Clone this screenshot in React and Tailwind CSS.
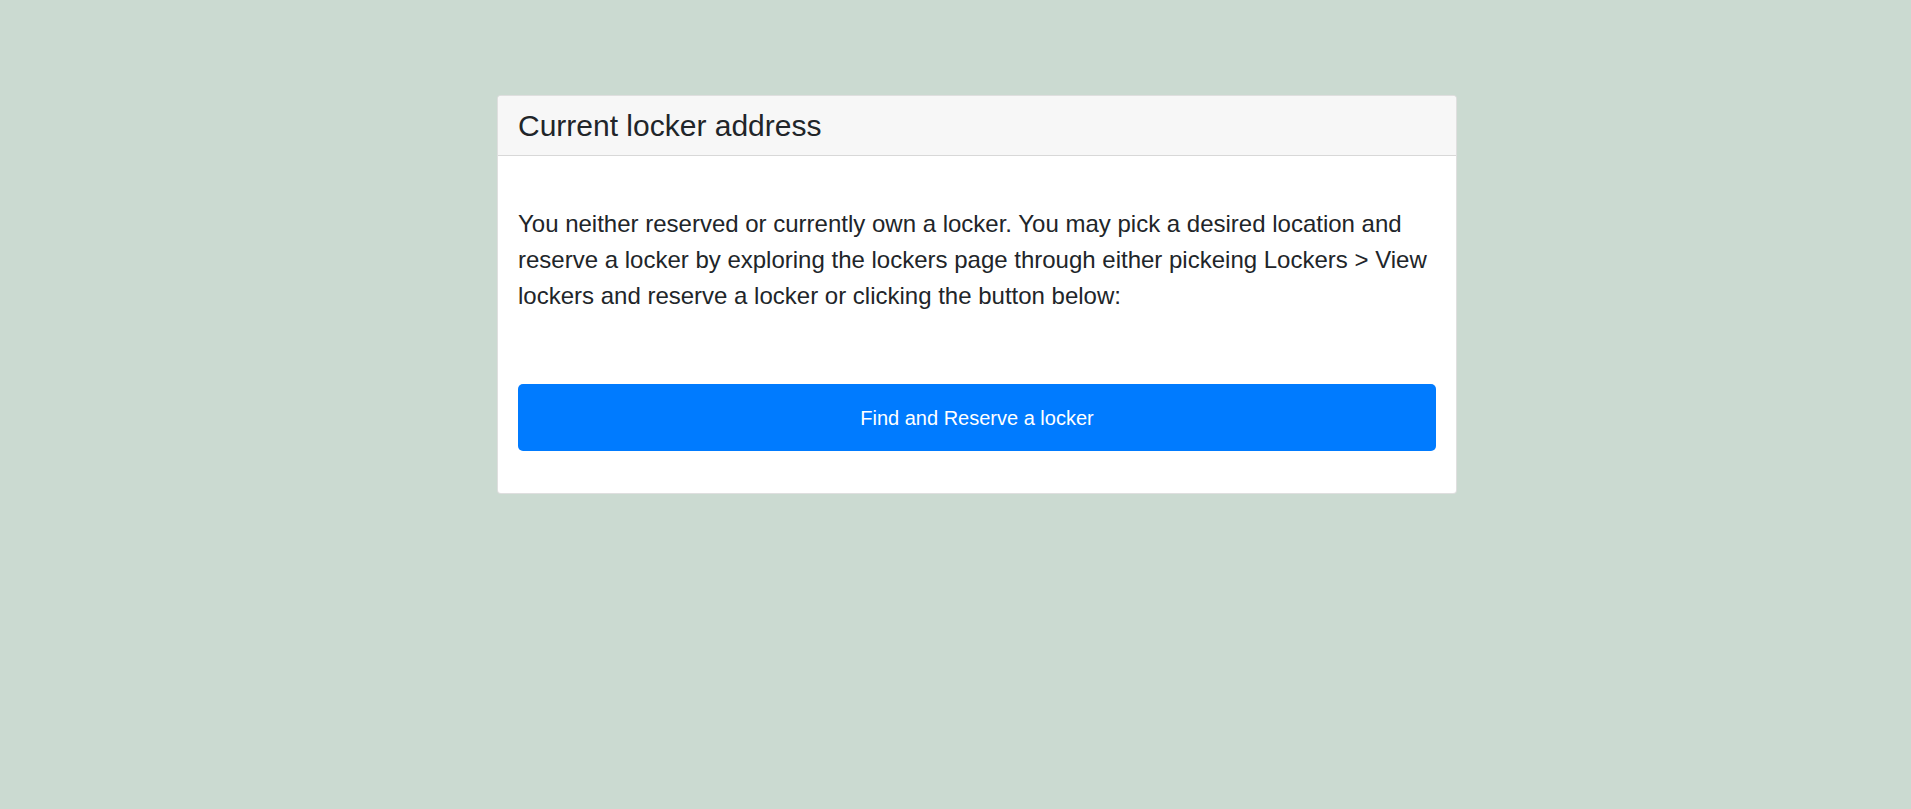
import React from 'react';

const FONT = { fontFamily: '"Liberation Sans", Arial, sans-serif' };

export default function App() {
  return (
    <div
      className="min-h-screen w-full bg-[#cbdad1] pt-[95px]"
      style={FONT}
    >
      {/* Locker card */}
      <div className="ml-[497px] w-[960px] rounded-[4px] border border-black/[0.125] bg-white">
        <div className="flex h-[60px] items-center rounded-t-[4px] border-b border-black/[0.125] bg-[#f7f7f7] px-5">
          <h3 className="text-[30px] leading-[36px] text-[#212529]">Current locker address</h3>
        </div>

        <div className="px-5 pt-[50px] pb-[42px]">
          <p className="text-[24px] leading-[36px] text-[#212529]">
            You neither reserved or currently own a locker. You may pick a desired location and
            reserve a locker by exploring the lockers page through either pickeing Lockers &gt; View
            lockers and reserve a locker or clicking the button below:
          </p>

          <button className="mt-[70px] flex h-[67px] w-full items-center justify-center rounded-[5px] bg-[#007bff] text-[20px] leading-[30px] text-white">
            Find and Reserve a locker
          </button>
        </div>
      </div>
    </div>
  );
}
